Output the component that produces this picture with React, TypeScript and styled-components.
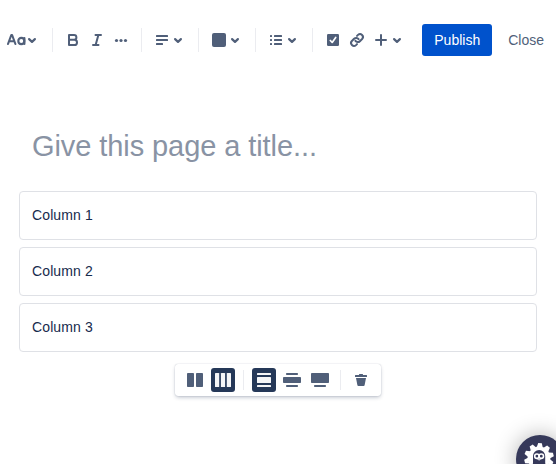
import React from "react";
import styled, { createGlobalStyle } from "styled-components";

const ink = "#505f79";
const navy = "#253858";

const GlobalStyle = createGlobalStyle`
  * { box-sizing: border-box; }
  body { margin: 0; background: #fff; font-family: "Liberation Sans", Arial, sans-serif; font-size: 14px; }
`;

const Page = styled.div`
  position: relative;
  width: 556px;
  height: 464px;
  overflow: hidden;
  background: #fff;
  display: flex;
  flex-direction: column;
`;

const Toolbar = styled.header`
  height: 80px;
  padding-left: 4px;
  display: flex;
  align-items: center;
`;

const ToolButton = styled.button`
  width: 24px;
  height: 24px;
  padding: 0;
  border: 0;
  background: none;
  color: ${ink};
  display: flex;
  align-items: center;
  justify-content: center;
  svg { display: block; flex: none; }
`;

const MenuButton = styled(ToolButton)`
  width: 40px;
  justify-content: flex-start;
  > svg:last-child { margin-left: -4px; }
`;

const Separator = styled.span<{ $height: number }>`
  width: 1px;
  height: ${(p) => p.$height}px;
  margin: 0 8px;
  background: #ebecf0;
`;

const Actions = styled.div`
  margin-left: auto;
  display: flex;
  gap: 4px;
`;

const ActionButton = styled.button<{ $primary?: boolean }>`
  height: 32px;
  padding: 0 12px;
  border: 0;
  border-radius: 3px;
  font: 14px/32px "Liberation Sans", Arial, sans-serif;
  color: ${(p) => (p.$primary ? "#fff" : ink)};
  background: ${(p) => (p.$primary ? "#0052cc" : "transparent")};
`;

const Title = styled.h1`
  margin: 46px 32px 0;
  height: 40px;
  font-size: 29px;
  line-height: 40px;
  letter-spacing: -0.08px;
  font-weight: 400;
  color: #8993a4;
`;

const Columns = styled.main`
  margin: 25px 19px 0;
  display: flex;
  flex-direction: column;
  gap: 7px;
`;

const Column = styled.section`
  height: 49px;
  padding: 0 12px;
  border: 1px solid #dfe1e6;
  border-radius: 4px;
  line-height: 47px;
  letter-spacing: 0.12px;
  color: #172b4d;
`;

const LayoutBar = styled.div`
  align-self: center;
  margin-top: 12px;
  height: 32px;
  padding: 0 8px;
  display: flex;
  align-items: center;
  border-radius: 3px;
  background: #fff;
  box-shadow: 0 0 1px rgba(9, 30, 66, 0.31), 0 2px 4px -1px rgba(9, 30, 66, 0.31);
`;

const LayoutGroup = styled.div`
  display: flex;
  gap: 4px;
`;

const LayoutButton = styled(ToolButton)<{ $selected?: boolean }>`
  border-radius: 3px;
  color: ${(p) => (p.$selected ? "#f4f5f7" : ink)};
  background: ${(p) => (p.$selected ? navy : "transparent")};
`;

const HelpBadge = styled.button`
  position: absolute;
  left: 516px;
  top: 435px;
  width: 48px;
  height: 48px;
  padding: 0;
  border: 0;
  border-radius: 50%;
  background: #36395a;
  box-shadow: 0 0 22px rgba(0, 0, 0, 0.3);
  svg { display: block; }
`;

const Icon = ({ children }: { children: React.ReactNode }) => (
  <svg width="24" height="24" viewBox="0 0 24 24" fill="currentColor">{children}</svg>
);

const Chevron = () => (
  <svg width="16" height="16" viewBox="4 4 16 16" fill="none" stroke="currentColor" strokeWidth="2.2" strokeLinecap="round" strokeLinejoin="round">
    <path d="m9.1 11.1 2.9 2.8 2.9-2.8" />
  </svg>
);

const TextStyleIcon = () => (
  <Icon>
    <g fill="none" stroke="currentColor" strokeWidth="2.1" strokeLinecap="round" strokeLinejoin="round">
      <path d="M4 16 7.300 7h.8L11.400 16M5.200 13.300h5M20.400 10V16" />
      <ellipse cx="17.300" cy="13" rx="3" ry="3.100" />
    </g>
  </Icon>
);

const gearTeeth = Array.from({ length: 10 }, (_, i) => i * 36 + 4);

const GearIcon = () => (
  <svg width="48" height="48" viewBox="0 0 48 48">
    <g fill="#fff">
      <circle cx="23" cy="23" r="11.400" />
      {gearTeeth.map((angle) => (
        <path key={angle} d="M20 12.300 21.200 8.200h3.600L26 12.300z" transform={`rotate(${angle} 23 23)`} />
      ))}
    </g>
    <path d="M15.800 34l1.200-6V21a6 6 0 0 1 12.200 0v7l1.300 6z" fill="#36395a" />
    <g fill="none" stroke="#fff" strokeWidth="1.600">
      <circle cx="20.900" cy="21.200" r="2.200" />
      <circle cx="25.300" cy="21.200" r="2.200" />
    </g>
    <path d="M20.700 24.300h4.800l-2.400 1.200z" fill="#fff" />
  </svg>
);

export default function App() {
  return (
    <Page>
      <GlobalStyle />
      <Toolbar>
        <MenuButton aria-label="Text styles"><TextStyleIcon /><Chevron /></MenuButton>
        <Separator $height={24} />
        <ToolButton aria-label="Bold">
          <Icon>
            <path d="M8 7h5a2.400 2.400 0 0 1 0 4.800H8zM8 11.800h5.400a2.600 2.600 0 0 1 0 5.200H8z" fill="none" stroke="currentColor" strokeWidth="2" strokeLinejoin="round" />
          </Icon>
        </ToolButton>
        <ToolButton aria-label="Italic">
          <Icon>
            <path d="M10.500 7H16M8 17h5.500M13.400 7l-2.800 10" fill="none" stroke="currentColor" strokeWidth="2" strokeLinecap="round" />
          </Icon>
        </ToolButton>
        <ToolButton aria-label="More formatting">
          <Icon><circle cx="7.500" cy="12.500" r="1.600" /><circle cx="12" cy="12.500" r="1.600" /><circle cx="16.500" cy="12.500" r="1.600" /></Icon>
        </ToolButton>
        <Separator $height={24} />
        <MenuButton aria-label="Alignment">
          <Icon><rect x="6" y="7" width="12" height="2" rx=".5" /><rect x="6" y="11" width="12" height="2" rx=".5" /><rect x="6" y="15" width="7" height="2" rx=".5" /></Icon>
          <Chevron />
        </MenuButton>
        <Separator $height={24} />
        <MenuButton aria-label="Text color"><Icon><rect x="5" y="5" width="14" height="14" rx="2" /></Icon><Chevron /></MenuButton>
        <Separator $height={24} />
        <MenuButton aria-label="Lists">
          <Icon>
            {[7, 11, 15].map((y) => (
              <React.Fragment key={y}>
                <rect x="6" y={y} width="2" height="2" rx=".5" />
                <rect x="10" y={y} width="8" height="2" rx=".5" />
              </React.Fragment>
            ))}
          </Icon>
          <Chevron />
        </MenuButton>
        <Separator $height={24} />
        <ToolButton aria-label="Task">
          <Icon>
            <rect x="6" y="6" width="12" height="12" rx="1.200" />
            <path d="m9.300 12.500 1.900 1.900 3.500-5" fill="none" stroke="#fff" strokeWidth="1.700" strokeLinecap="round" strokeLinejoin="round" />
          </Icon>
        </ToolButton>
        <ToolButton aria-label="Link">
          <Icon>
            <g fill="none" stroke="currentColor" strokeWidth="2" strokeLinecap="round" strokeLinejoin="round">
              <path d="M10.400 12.900a3 3 0 0 0 4.500.3l2.200-2.200a2.900 2.900 0 0 0-4.100-4.100l-1 1" />
              <path d="M13.600 11.100a3 3 0 0 0-4.500-.3l-2.200 2.200a2.900 2.900 0 0 0 4.100 4.100l1-1" />
            </g>
          </Icon>
        </ToolButton>
        <MenuButton aria-label="Insert">
          <Icon><path d="M12 7v10M7 12h10" stroke="currentColor" strokeWidth="2" strokeLinecap="round" /></Icon>
          <Chevron />
        </MenuButton>
        <Actions>
          <ActionButton $primary>Publish</ActionButton>
          <ActionButton>Close</ActionButton>
        </Actions>
      </Toolbar>
      <Title>Give this page a title...</Title>
      <Columns>
        <Column>Column 1</Column>
        <Column>Column 2</Column>
        <Column>Column 3</Column>
      </Columns>
      <LayoutBar>
        <LayoutGroup>
          <LayoutButton aria-label="Two columns"><Icon><rect x="4" y="5" width="7" height="14" rx=".8" /><rect x="13" y="5" width="7" height="14" rx=".8" /></Icon></LayoutButton>
          <LayoutButton $selected aria-label="Three columns"><Icon><rect x="4" y="5" width="4.200" height="14" rx=".6" /><rect x="9.900" y="5" width="4.200" height="14" rx=".6" /><rect x="15.800" y="5" width="4.200" height="14" rx=".6" /></Icon></LayoutButton>
        </LayoutGroup>
        <Separator $height={20} />
        <LayoutGroup>
          <LayoutButton $selected aria-label="Center"><Icon><rect x="5" y="5" width="14" height="2" rx=".5" /><rect x="5" y="9" width="14" height="6" rx=".6" /><rect x="5" y="17" width="14" height="2" rx=".5" /></Icon></LayoutButton>
          <LayoutButton aria-label="Wide"><Icon><rect x="6" y="5" width="12" height="2" rx=".8" /><rect x="3" y="9" width="18" height="6" rx=".8" /><rect x="6" y="17" width="12" height="2" rx=".8" /></Icon></LayoutButton>
          <LayoutButton aria-label="Full width"><Icon><rect x="3" y="5" width="18" height="10" rx=".8" /><rect x="6" y="17" width="12" height="2" rx=".8" /></Icon></LayoutButton>
        </LayoutGroup>
        <Separator $height={20} />
        <LayoutButton aria-label="Remove">
          <Icon><path d="M10 6.500c0-.3.200-.5.500-.5h3c.3 0 .5.200.5.500V7h3.500c.3 0 .5.200.5.500V9H6V7.500c0-.3.200-.5.500-.5H10zM7 10h10l-1.400 7.200a1 1 0 0 1-1 .8H9.400a1 1 0 0 1-1-.8z" /></Icon>
        </LayoutButton>
      </LayoutBar>
      <HelpBadge aria-label="Help"><GearIcon /></HelpBadge>
    </Page>
  );
}
